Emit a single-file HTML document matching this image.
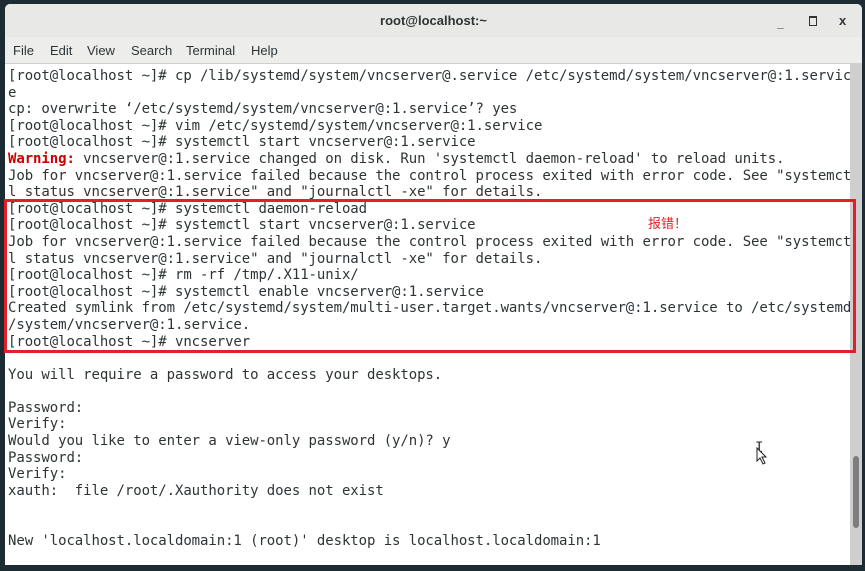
<!DOCTYPE html><html><head><meta charset="utf-8"><style>
body{margin:0;width:865px;height:571px;overflow:hidden;background:#1d2b33;position:relative;font-family:"Liberation Sans",sans-serif}
#win{position:absolute;left:5px;top:4px;width:857px;height:561px;background:#fff;border-radius:5px 5px 0 0;overflow:hidden}
#title{position:absolute;left:0;top:0;width:100%;height:33px;background:#e8e8e7;text-align:center;line-height:33px;font-size:13px;font-weight:bold;color:#2e3436}
#menu{position:absolute;left:0;top:33px;width:100%;height:26px;background:#ededec;border-bottom:1px solid #d0d0d0;font-size:13px;color:#2e3436}
#menu span{position:absolute;top:6px}
.wb{position:absolute;top:0;font-size:12px;color:#2e3436;font-weight:bold}
#term{position:absolute;left:3px;top:64px;font-family:"DejaVu Sans Mono",monospace;font-size:14px;line-height:16.6px;color:#2e3436;white-space:pre;letter-spacing:-0.08px}
.r{color:#cc0000;font-weight:bold}
#sb{position:absolute;left:845px;top:60px;width:12px;height:501px;background:#cfcfcf}
#th{position:absolute;left:848px;top:452px;width:6px;height:72px;background:#7e7e7e;border-radius:3px}
#box{position:absolute;left:4px;top:199px;width:846px;height:148px;border:3px solid #e3202a}
#note{position:absolute;left:648px;top:213px;color:#e3202a;font-size:13px;font-family:"Liberation Sans","Noto Sans CJK SC",sans-serif}
</style></head><body>
<div id="win">
<div id="title">root@localhost:~</div>
<span class="wb" style="left:772px;top:12px">_</span>
<div style="position:absolute;left:804px;top:12px;width:6px;height:7px;border:1.5px solid #2e3436;border-top-width:2.5px"></div>
<span class="wb" style="left:834px;top:9px;font-size:13px">x</span>
<div id="menu"><span style="left:8px">File</span><span style="left:45px">Edit</span><span style="left:82px">View</span><span style="left:126px">Search</span><span style="left:181px">Terminal</span><span style="left:246px">Help</span></div>
<div id="term">[root@localhost ~]# cp /lib/systemd/system/vncserver@.service /etc/systemd/system/vncserver@:1.servic
e
cp: overwrite ‘/etc/systemd/system/vncserver@:1.service’? yes
[root@localhost ~]# vim /etc/systemd/system/vncserver@:1.service
[root@localhost ~]# systemctl start vncserver@:1.service
<span class="r">Warning:</span> vncserver@:1.service changed on disk. Run 'systemctl daemon-reload' to reload units.
Job for vncserver@:1.service failed because the control process exited with error code. See "systemct
l status vncserver@:1.service" and "journalctl -xe" for details.
[root@localhost ~]# systemctl daemon-reload
[root@localhost ~]# systemctl start vncserver@:1.service
Job for vncserver@:1.service failed because the control process exited with error code. See "systemct
l status vncserver@:1.service" and "journalctl -xe" for details.
[root@localhost ~]# rm -rf /tmp/.X11-unix/
[root@localhost ~]# systemctl enable vncserver@:1.service
Created symlink from /etc/systemd/system/multi-user.target.wants/vncserver@:1.service to /etc/systemd
/system/vncserver@:1.service.
[root@localhost ~]# vncserver

You will require a password to access your desktops.

Password:
Verify:
Would you like to enter a view-only password (y/n)? y
Password:
Verify:
xauth:  file /root/.Xauthority does not exist


New 'localhost.localdomain:1 (root)' desktop is localhost.localdomain:1</div>
<div id="sb"></div><div id="th"></div>
</div>
<div id="box"></div>
<div id="note">报错！</div>
<div style="position:absolute;left:755px;top:440px;font-family:'DejaVu Sans Mono';font-size:14px;color:#333">I</div>
<svg style="position:absolute;left:756px;top:447px" width="12" height="18"><path d="M1 1 L1 14 L4 11 L7 17 L9 16 L6 10 L10 10 Z" fill="#fff" stroke="#222" stroke-width="1"/></svg>
</body></html>
